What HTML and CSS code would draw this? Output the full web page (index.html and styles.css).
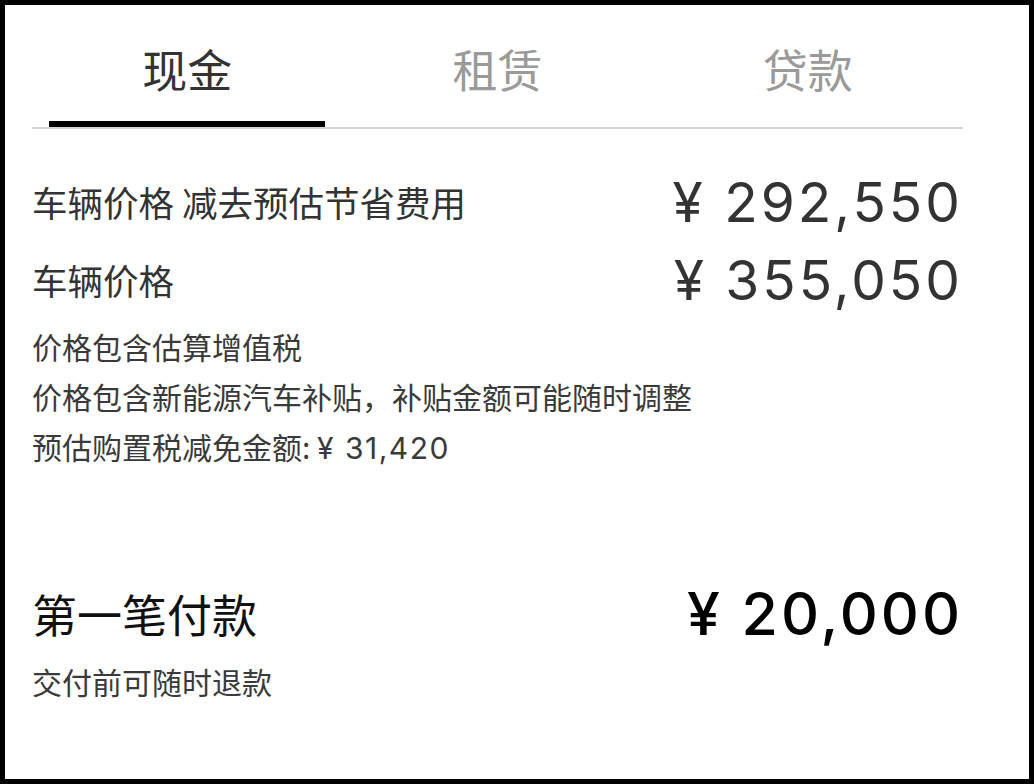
FILE: index.html
```html
<!DOCTYPE html>
<html lang="zh-CN">
<head>
<meta charset="utf-8">
<title>付款方式</title>
<link rel="stylesheet" href="styles.css">
</head>
<body>
<div class="frame">
  <div class="panel">
    <nav class="tabs">
      <div class="tab active">现金</div>
      <div class="tab">租赁</div>
      <div class="tab">贷款</div>
    </nav>
    <section class="prices">
      <div class="row">
        <span class="label">车辆价格 减去预估节省费用</span>
        <span class="amount">¥ 292,550</span>
      </div>
      <div class="row">
        <span class="label">车辆价格</span>
        <span class="amount">¥ 355,050</span>
      </div>
      <p class="note first">价格包含估算增值税</p>
      <p class="note">价格包含新能源汽车补贴，补贴金额可能随时调整</p>
      <p class="note">预估购置税减免金额: <span class="num">¥ 31,420</span></p>
    </section>
    <section class="payment">
      <div class="row big">
        <span class="label">第一笔付款</span>
        <span class="amount">¥ 20,000</span>
      </div>
      <p class="note">交付前可随时退款</p>
    </section>
  </div>
</div>
</body>
</html>
```
FILE: styles.css
```css
html, body {
  margin: 0;
  padding: 0;
  background: #000;
}
body {
  font-family: "Noto Sans CJK SC", "Noto Sans", sans-serif;
  color: #333;
}
.frame {
  margin: 5px;
  height: 774px;
  background: #fff;
  padding: 0 66px 0 27px;
  box-sizing: border-box;
}
.panel {
  width: 931px;
}
.tabs {
  display: grid;
  grid-template-columns: repeat(3, 1fr);
  border-bottom: 2px solid #d4d4d4;
}
.tab {
  text-align: center;
  font-size: 45px;
  line-height: 56px;
  padding-top: 36px;
  color: #9a9a9a;
}
.tab::after {
  content: "";
  display: block;
  height: 6px;
  margin: 24px 17px 0;
  background: transparent;
}
.tab.active {
  color: #333;
}
.tab.active::after {
  background: #000;
}
.prices {
  padding-top: 34px;
}
.row {
  display: flex;
  justify-content: space-between;
  align-items: center;
  height: 78px;
}
.label {
  font-size: 35.5px;
  line-height: 48px;
  color: #333;
}
.amount {
  font-family: "Inter", "Noto Sans", sans-serif;
  font-size: 55px;
  line-height: 64px;
  letter-spacing: 3px;
  color: #333;
}
.note {
  margin: 0;
  font-size: 30px;
  line-height: 50px;
  color: #3a3a3a;
}
.note.first {
  margin-top: 2px;
}
.num {
  font-family: "Inter", "Noto Sans", sans-serif;
  letter-spacing: 1.5px;
}
.payment {
  margin-top: 106px;
}
.row.big {
  height: 70px;
  margin-bottom: 7px;
}
.row.big .label {
  font-size: 45px;
  line-height: 60px;
  color: #111;
}
.row.big .amount {
  font-size: 59px;
  font-weight: 500;
  color: #000;
}
```
